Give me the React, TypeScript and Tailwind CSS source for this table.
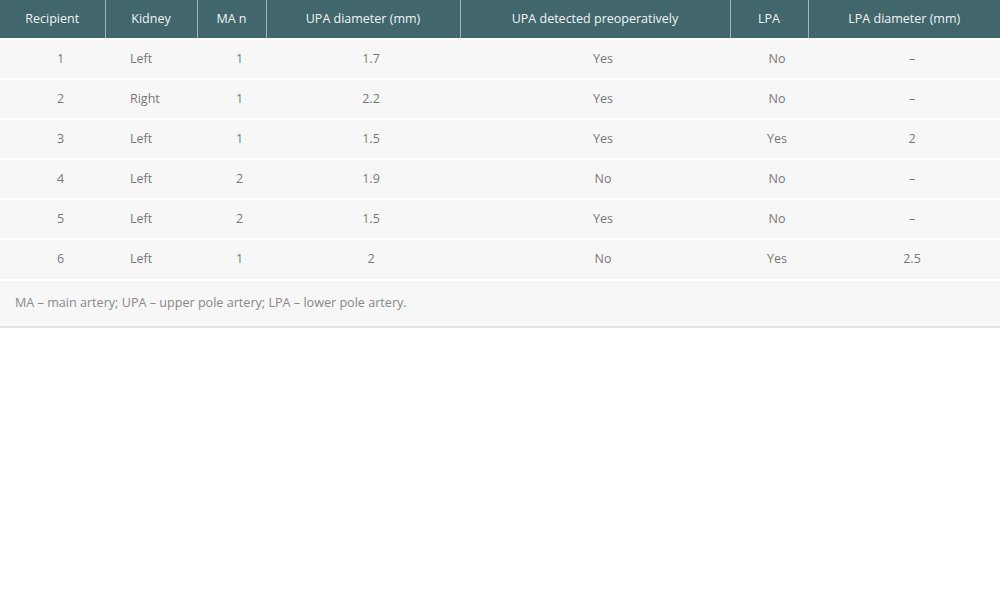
import React from 'react';

interface Row {
  recipient: string;
  kidney: string;
  man: string;
  upaDiameter: string;
  upaDetected: string;
  lpa: string;
  lpaDiameter: string;
}

const rows: Row[] = [
  { recipient: '1', kidney: 'Left', man: '1', upaDiameter: '1.7', upaDetected: 'Yes', lpa: 'No', lpaDiameter: '–' },
  { recipient: '2', kidney: 'Right', man: '1', upaDiameter: '2.2', upaDetected: 'Yes', lpa: 'No', lpaDiameter: '–' },
  { recipient: '3', kidney: 'Left', man: '1', upaDiameter: '1.5', upaDetected: 'Yes', lpa: 'Yes', lpaDiameter: '2' },
  { recipient: '4', kidney: 'Left', man: '2', upaDiameter: '1.9', upaDetected: 'No', lpa: 'No', lpaDiameter: '–' },
  { recipient: '5', kidney: 'Left', man: '2', upaDiameter: '1.5', upaDetected: 'Yes', lpa: 'No', lpaDiameter: '–' },
  { recipient: '6', kidney: 'Left', man: '1', upaDiameter: '2', upaDetected: 'No', lpa: 'Yes', lpaDiameter: '2.5' },
];

const th = 'h-[39px] px-2 text-center text-[12.5px] font-normal text-[#f1f5f5] border-r border-[#9fb4b7] last:border-r-0';
const td = 'h-[40px] pl-[24px] pr-2 text-center';

const App: React.FC = () => {
  return (
    <div className="w-[1000px] h-[600px] bg-white" style={{ fontFamily: '"Open Sans", sans-serif' }}>
      <div className="w-[1000px] border-b-2 border-[#e2e2e2] bg-[#f7f7f7]">
        <table className="w-full table-fixed border-collapse">
          <colgroup>
            <col className="w-[105px]" />
            <col className="w-[92px]" />
            <col className="w-[69px]" />
            <col className="w-[194px]" />
            <col className="w-[270px]" />
            <col className="w-[78px]" />
            <col className="w-[192px]" />
          </colgroup>
          <thead>
            <tr className="bg-[#41666c]">
              <th className={th}>Recipient</th>
              <th className={th}>Kidney</th>
              <th className={th}>MA n</th>
              <th className={th}>UPA diameter (mm)</th>
              <th className={th}>UPA detected preoperatively</th>
              <th className={th}>LPA</th>
              <th className={th}>LPA diameter (mm)</th>
            </tr>
          </thead>
          <tbody className="text-[12.5px] text-[#777777]">
            {rows.map((r) => (
              <tr key={r.recipient} className="border-t-2 border-white bg-[#f7f7f7]">
                <td className={td}>{r.recipient}</td>
                <td className="h-[40px] pl-[25px] text-left">{r.kidney}</td>
                <td className={td}>{r.man}</td>
                <td className={td}>{r.upaDiameter}</td>
                <td className={td}>{r.upaDetected}</td>
                <td className={td}>{r.lpa}</td>
                <td className={td}>{r.lpaDiameter}</td>
              </tr>
            ))}
          </tbody>
        </table>
        <div className="border-t-2 border-white h-[47px] flex items-center px-[15px] text-[12.6px] text-[#888888]">
          MA – main artery; UPA – upper pole artery; LPA – lower pole artery.
        </div>
      </div>
    </div>
  );
};

export default App;
